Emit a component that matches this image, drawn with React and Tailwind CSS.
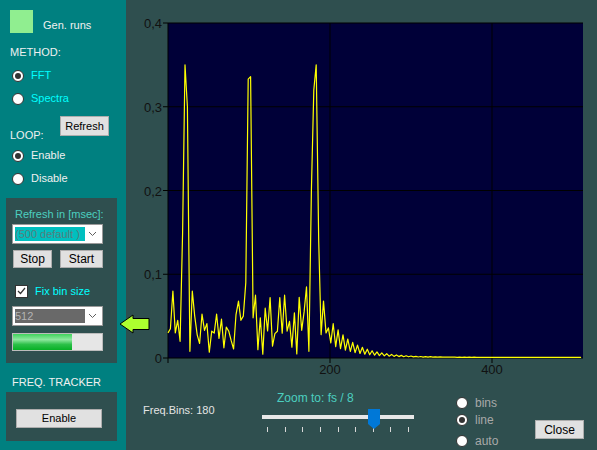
import React from 'react';

// pseudo random so the spectrum looks the same on every render
function rng(seed) {
  let s = seed;
  return () => {
    s = (s * 16807) % 2147483647;
    return (s - 1) / 2147483646;
  };
}

const W = 415;
const H = 335;
const PX = 42; // plot left inside the svg
const PY = 23; // plot top inside the svg

function buildSpectrum() {
  const r = rng(11);
  const vals = [];
  for (let i = 0; i <= 170; i++) {
    const x = i * 2.43;
    let v;
    if (x < 160) {
      v = i % 2 ? 0.004 + r() * 0.035 : 0.02 + r() * 0.055;
    } else {
      const a = 0.05 * Math.exp(-(x - 160) / 24);
      v = (i % 2 ? a * 0.35 : a) + 0.0008;
    }
    vals.push(v);
  }
  const fix = {
    0: 0.03, 1: 0.035, 2: 0.08, 3: 0.03, 4: 0.045, 5: 0.02, 6: 0.15, 7: 0.35, 8: 0.3, 9: 0.008, 10: 0.08, 11: 0.05,
    29: 0.068, 30: 0.045, 31: 0.05, 32: 0.09, 33: 0.333, 34: 0.336, 35: 0.048, 36: 0.075, 37: 0.01, 38: 0.048,
    56: 0.055, 57: 0.085, 58: 0.008, 59: 0.2, 60: 0.32, 61: 0.35, 62: 0.14, 63: 0.028, 64: 0.068, 65: 0.03, 66: 0.036, 67: 0.018,
  };
  Object.entries(fix).forEach(([k, v]) => (vals[k] = v));
  return vals
    .map((v, i) => `${(PX + i * 2.43).toFixed(1)},${(PY + H - v * 837.5).toFixed(1)}`)
    .join(' ');
}

const spectrum = buildSpectrum();

function Radio({ checked }) {
  return (
    <span className="w-[12px] h-[12px] shrink-0 rounded-full bg-white border border-[#333] flex items-center justify-center">
      {checked && <span className="w-[6px] h-[6px] rounded-full bg-[#333]" />}
    </span>
  );
}

function Btn({ children, className = '' }) {
  return (
    <button className={`bg-[#e1e1e1] border border-[#adadad] text-black text-[11px] leading-none flex items-center justify-center ${className}`}>
      {children}
    </button>
  );
}

function Chevron() {
  return (
    <svg width="9" height="6" viewBox="0 0 9 6" className="shrink-0">
      <polyline points="1,1 4.5,4.5 8,1" fill="none" stroke="#606060" strokeWidth="1" />
    </svg>
  );
}

function Combo({ text, fill, textColor }) {
  return (
    <div className="w-[91px] h-[20px] bg-white border border-[#9a9a9a] flex items-center pl-[2px] pr-[5px]">
      <div className={`w-[70px] h-[14px] shrink-0 overflow-hidden whitespace-nowrap flex items-center text-[11px] leading-none ${fill} ${textColor}`}>{text}</div>
      <div className="flex-1 flex justify-end">
        <Chevron />
      </div>
    </div>
  );
}

function Chart() {
  const yLabels = ['0,4', '0,3', '0,2', '0,1', '0'];
  return (
    <svg width="471" height="380" className="block">
      <rect x={PX} y={PY} width={W} height={H} fill="#000038" />
      {[0, 1, 2, 3].map((k) => (
        <line key={k} x1={PX - 5} x2={PX + W} y1={PY + k * 83.75} y2={PY + k * 83.75} stroke="#000" strokeWidth="1" />
      ))}
      <line x1={PX} x2={PX} y1={PY} y2={PY + H + 5} stroke="#000" />
      <line x1={PX - 5} x2={PX + W} y1={PY + H} y2={PY + H} stroke="#000" />
      {[162, 324].map((dx) => (
        <line key={dx} x1={PX + dx} x2={PX + dx} y1={PY} y2={PY + H + 5} stroke="#000" />
      ))}
      <polyline points={spectrum} fill="none" stroke="#ffff00" strokeWidth="1.2" strokeLinejoin="round" />
      {yLabels.map((t, k) => (
        <text key={t} x={PX - 6} y={PY + k * 83.75 + 5} textAnchor="end" fontSize="13" fontFamily="Liberation Sans, sans-serif" fill="#111">
          {t}
        </text>
      ))}
      <text x={PX + 162} y={374} textAnchor="middle" fontSize="13" fontFamily="Liberation Sans, sans-serif" fill="#111">200</text>
      <text x={PX + 324} y={374} textAnchor="middle" fontSize="13" fontFamily="Liberation Sans, sans-serif" fill="#111">400</text>
    </svg>
  );
}

export default function App() {
  const ticks = [0, 1, 2, 3, 4, 5, 6, 7, 8];
  return (
    <div className="relative w-[597px] h-[450px] flex overflow-hidden font-['Liberation_Sans',sans-serif] text-[11px]">
      {/* left control panel */}
      <div className="w-[126px] h-full bg-[#008080] flex flex-col">
        <div className="pl-[10px] pt-[10px] flex items-end">
          <div className="w-[23px] h-[23px] bg-[#90ee90]" />
          <span className="ml-[10px] mb-[1px] text-[#f0f0f0] leading-[14px]">Gen. runs</span>
        </div>
        <div className="pl-[10px] mt-[12px] text-[#f0f0f0] leading-[14px]">METHOD:</div>
        <div className="pl-[12px] mt-[5px] h-[23px] flex items-center gap-[7px]">
          <Radio checked />
          <span className="text-[#00ffff]">FFT</span>
        </div>
        <div className="pl-[12px] h-[23px] flex items-center gap-[7px]">
          <Radio />
          <span className="text-[#00ffff]">Spectra</span>
        </div>
        <div className="pl-[10px] mt-[6px] flex items-start">
          <span className="w-[50px] mt-[12px] text-[#f0f0f0] leading-[14px]">LOOP:</span>
          <Btn className="w-[49px] h-[20px]">Refresh</Btn>
        </div>
        <div className="pl-[12px] mt-[2px] h-[23px] flex items-center gap-[7px]">
          <Radio checked />
          <span className="text-[#f0f0f0]">Enable</span>
        </div>
        <div className="pl-[12px] h-[23px] flex items-center gap-[7px]">
          <Radio />
          <span className="text-[#f0f0f0]">Disable</span>
        </div>

        <div className="ml-[6px] mt-[8px] w-[111px] h-[165px] bg-[#2f4f4f] flex flex-col pl-[6px]">
          <div className="pl-[3px] mt-[9px] leading-[14px] text-[#4ccfc0]">Refresh in [msec]:</div>
          <div className="mt-[3px]">
            <Combo text="(500 default )" fill="bg-[#00bfbf]" textColor="text-[#577d7d]" />
          </div>
          <div className="mt-[6px] flex">
            <Btn className="ml-[1px] w-[39px] h-[18px] text-[12px]">Stop</Btn>
            <Btn className="ml-[8px] w-[43px] h-[18px] text-[12px]">Start</Btn>
          </div>
          <div className="mt-[16px] pl-[3px] flex items-center gap-[7px]">
            <span className="w-[13px] h-[13px] bg-white border border-[#333] flex items-center justify-center">
              <svg width="9" height="8" viewBox="0 0 9 8">
                <polyline points="1,4 3.5,6.5 8,1" fill="none" stroke="#333" strokeWidth="1.2" />
              </svg>
            </span>
            <span className="text-[#00ffff] leading-[14px]">Fix bin size</span>
          </div>
          <div className="mt-[8px]">
            <Combo text="512" fill="bg-[#696969]" textColor="text-[#b4b4b4]" />
          </div>
          <div className="mt-[7px] w-[91px] h-[18px] bg-[#e6e6e6] border border-[#bcbcbc]">
            <div className="h-full w-[59px] bg-[linear-gradient(180deg,#3fd35c_0%,#8ee89f_35%,#2bc048_65%,#06b025_100%)]" />
          </div>
        </div>

        <div className="pl-[12px] mt-[12px] leading-[14px] text-[#f0f0f0]">FREQ. TRACKER</div>
        <div className="ml-[6px] mt-[3px] w-[111px] h-[49px] bg-[#2f4f4f] pt-[17px] pl-[10px]">
          <Btn className="w-[86px] h-[19px]">Enable</Btn>
        </div>
      </div>

      {/* right chart area */}
      <div className="flex-1 h-full bg-[#2f4f4f] flex flex-col">
        <Chart />
        <div className="flex pl-[17px]">
          <div className="w-[119px] pt-[23px] text-[#e4e4e4] leading-[14px]">Freq.Bins: 180</div>
          <div className="w-[152px] flex flex-col">
            <div className="pl-[15px] pt-[11px] leading-[14px] text-[12px] text-[#4ccfc0]">Zoom to: fs / 8</div>
            <div className="relative h-[23px]">
              <div className="absolute left-0 right-0 top-[10px] h-[4px] bg-[#e7e7e7]" />
              <svg width="12" height="20" viewBox="0 0 12 20" className="absolute left-[106px] top-[4px]">
                <polygon points="0,0 12,0 12,15 6,20 0,15" fill="#0078d7" />
              </svg>
            </div>
            <div className="flex justify-between px-[5px] mt-[-1px]">
              {ticks.map((t) => (
                <span key={t} className="w-[1px] h-[5px] bg-[#d8d8d8]" />
              ))}
            </div>
          </div>
          <div className="ml-[42px] w-[79px] flex flex-col text-[#a9a9a9] text-[12px]">
            <div className="mt-[15px] h-[15px] flex items-center gap-[7px]">
              <Radio />
              <span>bins</span>
            </div>
            <div className="mt-[2px] h-[15px] flex items-center gap-[7px]">
              <Radio checked />
              <span>line</span>
            </div>
            <div className="mt-[6px] h-[15px] flex items-center gap-[7px]">
              <Radio />
              <span>auto</span>
            </div>
          </div>
          <div className="pt-[40px]">
            <Btn className="w-[49px] h-[19px] text-[12px]">Close</Btn>
          </div>
        </div>
      </div>

      {/* pointer arrow lying over the panel edge */}
      <svg width="32" height="20" viewBox="0 0 32 20" className="absolute left-[119px] top-[314px]">
        <polygon points="1,10 14,1 14,4.5 30,4.5 30,15.5 14,15.5 14,19" fill="#adff2f" stroke="#000" strokeWidth="1" />
      </svg>
    </div>
  );
}
